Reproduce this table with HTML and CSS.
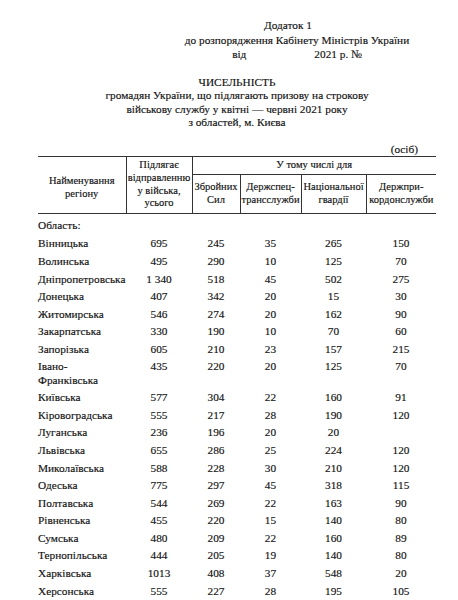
FILE: index.html
```html
<!DOCTYPE html>
<html lang="uk">
<head>
<meta charset="utf-8">
<link rel="stylesheet" href="styles.css">
</head>
<body>
<div class="page">
  <div class="annex">
    <div class="annex-title">Додаток 1</div>
    <div>до розпорядження Кабінету Міністрів України</div>
    <div class="annex-date"><span>від</span><span>2021 р. №</span></div>
  </div>
  <div class="title">
    <div>ЧИСЕЛЬНІСТЬ</div>
    <div>громадян України, що підлягають призову на строкову</div>
    <div>військову службу у квітні — червні 2021 року</div>
    <div>з областей, м. Києва</div>
  </div>
  <div class="unit">(осіб)</div>
  <table class="data">
    <colgroup>
      <col class="c1"><col class="c2"><col class="c3"><col class="c4"><col class="c5"><col class="c6">
    </colgroup>
    <thead>
      <tr class="h1">
        <th rowspan="2" class="first"><span class="lower">Найменування регіону</span></th>
        <th rowspan="2">Підлягає відправленню у війська, усього</th>
        <th colspan="4" class="group">У тому числі для</th>
      </tr>
      <tr class="h2">
        <th>Збройних Сил</th>
        <th>Держспец-трансслужби</th>
        <th>Національної гвардії</th>
        <th class="last">Держпри-кордонслужби</th>
      </tr>
    </thead>
    <tbody>
      <tr class="section"><td>Область:</td><td></td><td></td><td></td><td></td><td></td></tr>
      <tr><td>Вінницька</td><td>695</td><td>245</td><td>35</td><td>265</td><td>150</td></tr>
      <tr><td>Волинська</td><td>495</td><td>290</td><td>10</td><td>125</td><td>70</td></tr>
      <tr><td>Дніпропетровська</td><td>1 340</td><td>518</td><td>45</td><td>502</td><td>275</td></tr>
      <tr><td>Донецька</td><td>407</td><td>342</td><td>20</td><td>15</td><td>30</td></tr>
      <tr><td>Житомирська</td><td>546</td><td>274</td><td>20</td><td>162</td><td>90</td></tr>
      <tr><td>Закарпатська</td><td>330</td><td>190</td><td>10</td><td>70</td><td>60</td></tr>
      <tr><td>Запорізька</td><td>605</td><td>210</td><td>23</td><td>157</td><td>215</td></tr>
      <tr><td>Івано-<br>Франківська</td><td>435</td><td>220</td><td>20</td><td>125</td><td>70</td></tr>
      <tr><td>Київська</td><td>577</td><td>304</td><td>22</td><td>160</td><td>91</td></tr>
      <tr><td>Кіровоградська</td><td>555</td><td>217</td><td>28</td><td>190</td><td>120</td></tr>
      <tr><td>Луганська</td><td>236</td><td>196</td><td>20</td><td>20</td><td></td></tr>
      <tr><td>Львівська</td><td>655</td><td>286</td><td>25</td><td>224</td><td>120</td></tr>
      <tr><td>Миколаївська</td><td>588</td><td>228</td><td>30</td><td>210</td><td>120</td></tr>
      <tr><td>Одеська</td><td>775</td><td>297</td><td>45</td><td>318</td><td>115</td></tr>
      <tr><td>Полтавська</td><td>544</td><td>269</td><td>22</td><td>163</td><td>90</td></tr>
      <tr><td>Рівненська</td><td>455</td><td>220</td><td>15</td><td>140</td><td>80</td></tr>
      <tr><td>Сумська</td><td>480</td><td>209</td><td>22</td><td>160</td><td>89</td></tr>
      <tr><td>Тернопільська</td><td>444</td><td>205</td><td>19</td><td>140</td><td>80</td></tr>
      <tr><td>Харківська</td><td>1013</td><td>408</td><td>37</td><td>548</td><td>20</td></tr>
      <tr><td>Херсонська</td><td>555</td><td>227</td><td>28</td><td>195</td><td>105</td></tr>
    </tbody>
  </table>
</div>
</body>
</html>
```

FILE: styles.css
```css
html, body {
  margin: 0;
  padding: 0;
  background: #ffffff;
}
body {
  font-family: "Liberation Serif", "Times New Roman", serif;
  color: #111111;
  font-size: 11.3px;
  -webkit-text-stroke: 0.15px #111111;
}
.page {
  width: 458px;
  height: 600px;
  overflow: hidden;
  padding-top: 18px;
  box-sizing: border-box;
}
.annex {
  margin-left: 157px;
  width: 280px;
  text-align: center;
  line-height: 14.5px;
  white-space: nowrap;
}
.annex-title {
  padding-right: 18px;
}
.annex-date {
  display: flex;
  justify-content: center;
  gap: 68px;
}
.title {
  margin: 14px 0 0 38px;
  width: 398px;
  text-align: center;
  line-height: 13.5px;
  white-space: nowrap;
}
.unit {
  margin: 13px 0 0 38px;
  width: 380px;
  text-align: right;
  line-height: 13px;
}
table.data {
  margin: 0 0 0 38px;
  width: 398px;
  table-layout: fixed;
  border-collapse: collapse;
}
col.c1 { width: 88px; }
col.c2 { width: 66px; }
col.c3 { width: 48px; }
col.c4 { width: 61px; }
col.c5 { width: 65px; }
col.c6 { width: 70px; }
thead th {
  font-weight: normal;
  font-size: 10.5px;
  line-height: 12.7px;
  padding: 0;
  text-align: center;
  vertical-align: middle;
  border: 1px solid #333333;
}
thead th.first { border-left: none; }
thead th.last { border-right: none; }
thead th.group { border-right: none; }
.lower {
  display: block;
  padding-top: 6px;
}
tr.h1 th.group { height: 17px; }
tr.h2 th { height: 38px; }
tbody td {
  padding: 2.2px 0;
  line-height: 13.2px;
  text-align: center;
  vertical-align: top;
}
tbody td:first-child {
  text-align: left;
}
tbody tr.section td {
  padding-top: 5px;
  padding-bottom: 3.5px;
}
```
